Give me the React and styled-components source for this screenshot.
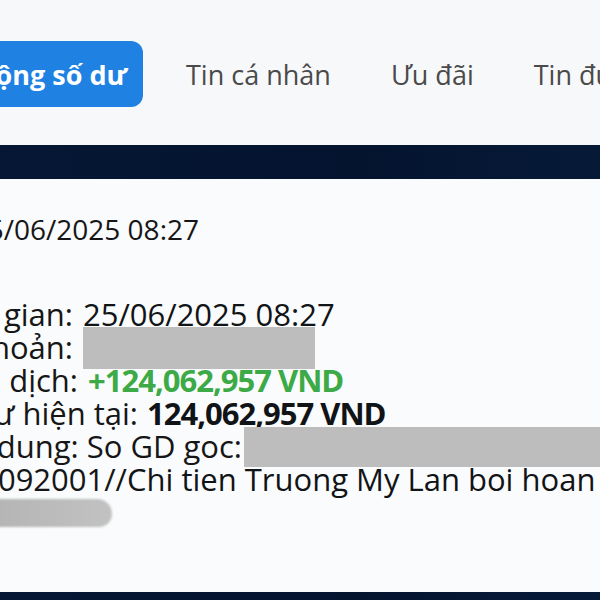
import React from "react";
import styled, { createGlobalStyle } from "styled-components";

const GlobalStyle = createGlobalStyle`
  html, body {
    margin: 0;
    padding: 0;
    width: 600px;
    height: 600px;
    overflow: hidden;
    background: #fafbfc;
  }
  body {
    font-family: "Open Sans", "Noto Sans", sans-serif;
  }
`;

const Page = styled.div`
  width: 600px;
  height: 600px;
  display: flex;
  flex-direction: column;
  overflow: hidden;
`;

const Header = styled.div`
  flex: none;
  height: 145px;
  box-sizing: border-box;
  padding-top: 41px;
  background: #f7f8fa;
`;

const Tabs = styled.nav`
  display: flex;
  align-items: center;
  white-space: nowrap;
`;

const ActiveTab = styled.div`
  flex: none;
  display: flex;
  justify-content: flex-end;
  align-items: center;
  box-sizing: border-box;
  width: 163px;
  height: 66px;
  margin-left: -20px;
  margin-right: 43px;
  padding-right: 16px;
  border-radius: 12px;
  background: #1f82e2;
  color: #ffffff;
  font-size: 27px;
  font-weight: 700;
`;

const Tab = styled.div`
  flex: none;
  font-size: 27px;
  font-weight: 500;
  color: #4a4a4a;

  & + & {
    margin-left: 60px;
  }
`;

const Band = styled.div`
  flex: none;
  height: ${(p) => p.$h}px;
  background: linear-gradient(90deg, #051734 0%, #04142f 60%, #061a37 100%);
`;

const Content = styled.div`
  flex: 1;
  box-sizing: border-box;
  padding-top: 34px;
  background: #fafbfc;
  color: #161616;
  font-weight: 500;
  white-space: nowrap;
`;

const DateLine = styled.div`
  display: flex;
  justify-content: flex-end;
  width: 199px;
  height: 33px;
  line-height: 33px;
  font-size: 28px;
  margin-bottom: 52px;
`;

const Row = styled.div`
  display: flex;
  align-items: center;
  height: 33px;
  line-height: 33px;
  font-size: 31px;
`;

const Label = styled.span`
  flex: none;
  display: flex;
  justify-content: flex-end;
  width: ${(p) => p.$w}px;
  margin-right: ${(p) => p.$gap}px;
`;

const Value = styled.span`
  flex: none;
  font-weight: ${(p) => (p.$tone ? 700 : 500)};
  letter-spacing: ${(p) => (p.$tone ? "-1px" : "0")};
  color: ${(p) => (p.$tone === "green" ? "#3caa46" : "#111417")};
`;

const Redacted = styled.span`
  flex: none;
  width: ${(p) => p.$w}px;
  height: ${(p) => p.$h}px;
  background: #bebdbe;
`;

const Smudge = styled.span`
  flex: none;
  width: 124px;
  height: 28px;
  margin-left: -12px;
  border-radius: 6px 16px 14px 4px;
  background: linear-gradient(90deg, #b4b4b4, #c2c2c2);
  filter: blur(1.2px);
`;

const rows = [
  { label: "Thời gian:", w: 73, gap: 10, value: "25/06/2025 08:27" },
  { label: "Tài khoản:", w: 73, gap: 10, redact: [232, 42] },
  { label: "Giao dịch:", w: 78, gap: 10, value: "+124,062,957 VND", tone: "green" },
  { label: "Số dư hiện tại:", w: 138, gap: 9, value: "124,062,957 VND", tone: "bold" },
  { label: "Nội dung: So GD goc:", w: 242, gap: 2, redact: [360, 40] },
  { label: "092001//", w: 127, gap: 0, value: "Chi tien Truong My Lan boi hoan" },
];

export default function App() {
  return (
    <>
      <GlobalStyle />
      <Page>
        <Header>
          <Tabs>
            <ActiveTab>Biến động số dư</ActiveTab>
            <Tab>Tin cá nhân</Tab>
            <Tab>Ưu đãi</Tab>
            <Tab>Tin được lưu</Tab>
          </Tabs>
        </Header>
        <Band $h={34} />
        <Content>
          <DateLine>25/06/2025 08:27</DateLine>
          {rows.map((r, i) => (
            <Row key={i}>
              <Label $w={r.w} $gap={r.gap}>{r.label}</Label>
              {r.value && <Value $tone={r.tone}>{r.value}</Value>}
              {r.redact && <Redacted $w={r.redact[0]} $h={r.redact[1]} />}
            </Row>
          ))}
          <Row>
            <Smudge />
          </Row>
        </Content>
        <Band $h={8} />
      </Page>
    </>
  );
}
